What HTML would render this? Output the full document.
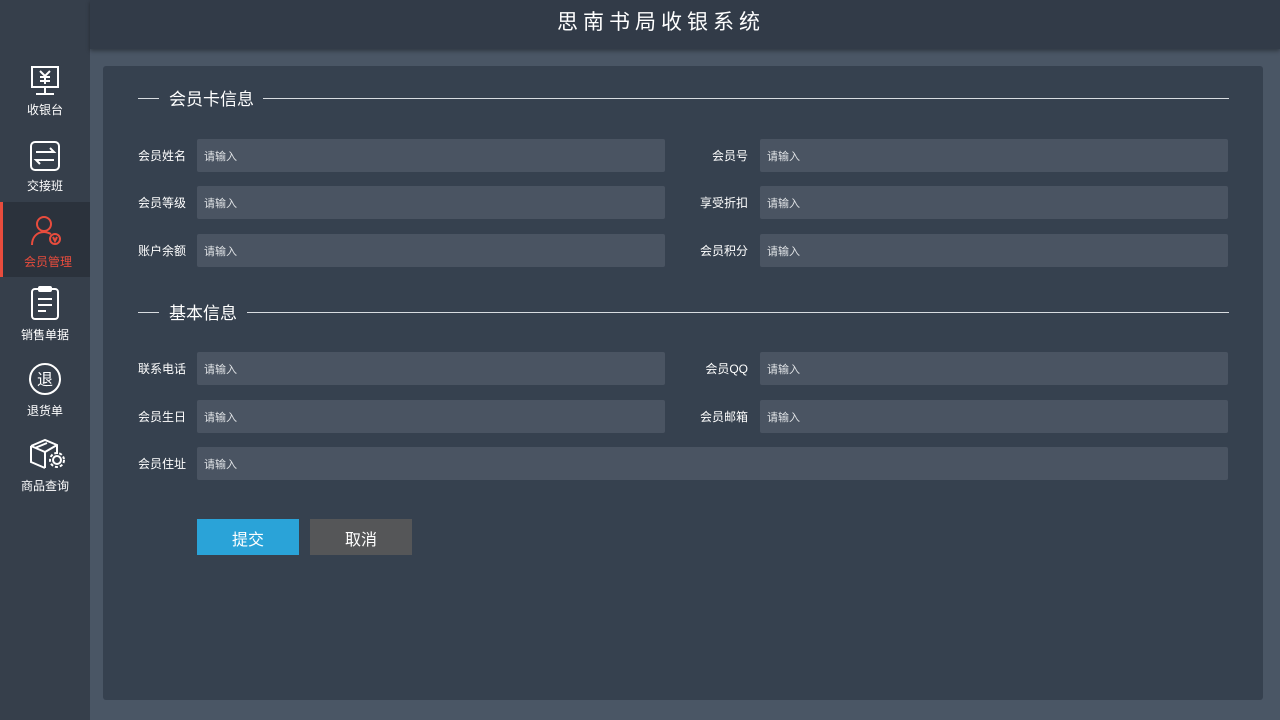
<!DOCTYPE html>
<html><head><meta charset="utf-8"><style>
*{margin:0;padding:0;box-sizing:border-box}
body{width:1280px;height:720px;background:#4a5665;font-family:"Liberation Sans","Noto Sans CJK SC",sans-serif;color:#fff;position:relative;overflow:hidden}
.side{position:absolute;left:0;top:0;width:90px;height:720px;background:#363f4b}
.hdr{position:absolute;left:90px;top:0;width:1190px;height:49px;background:#323b48;box-shadow:0 2px 4px rgba(0,0,0,.35)}
.hdr div{position:absolute;left:467px;top:10px;font-size:21px;line-height:26px;letter-spacing:5px;white-space:nowrap}
.item{position:absolute;left:0;width:90px;text-align:center;font-size:12px}
.item svg{position:absolute;left:27px}
.item span{position:absolute;left:0;width:90px}
.act{background:#2b323c;border-left:3px solid #e84c3d;color:#e84c3d}
.panel{position:absolute;left:103px;top:66px;width:1160px;height:634px;background:#36414f;border-radius:3px}
.sec{position:absolute;font-size:17px}
.ln{position:absolute;height:1px;background:#d8dce0}
.lbl{position:absolute;font-size:12px;width:60px}
.in{position:absolute;height:33px;background:#4a5462;border-radius:2px;font-size:11px;color:#e0e3e6;padding-left:7px;display:flex;align-items:center;padding-top:1px}
.btn{position:absolute;top:519px;width:102px;height:36px;font-size:16px;display:flex;align-items:center;justify-content:center;padding-top:1px}
</style></head><body>
<div class="side">
 <div class="item" style="top:62px;height:60px"><svg style="top:2px" width="36" height="34" viewBox="0 0 36 34" fill="none" stroke="#fff" stroke-width="2"><rect x="5" y="3" width="26" height="20"/><path d="M18 23v6M9 30h18M13 7l5 5 5-5M18 12v8M13 13h10M13 17h10"/></svg><span style="top:39px">收银台</span></div>
 <div class="item" style="top:138px;height:60px"><svg style="top:2px" width="36" height="34" viewBox="0 0 36 34" fill="none" stroke="#fff" stroke-width="2"><rect x="4" y="2" width="28" height="28" rx="4"/><path d="M9 12h18l-4-4M27 20H9l4 4"/></svg><span style="top:39px">交接班</span></div>
 <div class="item act" style="top:202px;height:75px"><svg style="top:12px;left:24px" width="36" height="34" viewBox="0 0 36 34" fill="none" stroke="#e84c3d" stroke-width="2"><circle cx="17" cy="10" r="7"/><path d="M5 31c0-8 5-13 12-13 3 0 5 1 7 2"/><circle cx="28" cy="25" r="5"/><path d="M26 23l2 4 2-4"/></svg><span style="top:51px">会员管理</span></div>
 <div class="item" style="top:284px;height:60px"><svg style="top:1px" width="36" height="36" viewBox="0 0 36 36" fill="none" stroke="#fff" stroke-width="2"><rect x="5" y="4" width="26" height="30" rx="3"/><rect x="12" y="2" width="12" height="4" rx="1"/><path d="M11 14h14M11 20h14M11 26h8"/></svg><span style="top:42px">销售单据</span></div>
 <div class="item" style="top:362px;height:60px"><svg style="top:0" width="36" height="36" viewBox="0 0 36 36" fill="none" stroke="#fff" stroke-width="2"><circle cx="18" cy="17" r="15"/><text x="18" y="23" font-size="16" fill="#fff" stroke="none" text-anchor="middle" font-family="Noto Sans CJK SC">退</text></svg><span style="top:40px">退货单</span></div>
 <div class="item" style="top:436px;height:60px"><svg style="top:0" width="38" height="36" viewBox="0 0 38 36" fill="none" stroke="#fff" stroke-width="2"><path d="M4 10l14-6 12 5v9M4 10v16l14 6M4 10l14 6v16M18 16l12-7M8 12l12-5"/><circle cx="30" cy="24" r="4"/><circle cx="30" cy="24" r="7" stroke-dasharray="3 2"/></svg><span style="top:41px">商品查询</span></div>
</div>
<div class="hdr"><div>思南书局收银系统</div></div>
<div class="panel"></div>
<div class="ln" style="left:138px;top:98px;width:21px"></div>
<div class="sec" style="left:169px;top:85px">会员卡信息</div>
<div class="ln" style="left:263px;top:98px;width:966px"></div>
<div class="ln" style="left:138px;top:312px;width:21px"></div>
<div class="sec" style="left:169px;top:299px">基本信息</div>
<div class="ln" style="left:247px;top:312px;width:982px"></div>

<div class="lbl" style="left:138px;top:147px">会员姓名</div><div class="in" style="left:197px;top:139px;width:468px">请输入</div>
<div class="lbl" style="left:688px;top:147px;text-align:right">会员号</div><div class="in" style="left:760px;top:139px;width:468px">请输入</div>
<div class="lbl" style="left:138px;top:194px">会员等级</div><div class="in" style="left:197px;top:186px;width:468px">请输入</div>
<div class="lbl" style="left:688px;top:194px;text-align:right">享受折扣</div><div class="in" style="left:760px;top:186px;width:468px">请输入</div>
<div class="lbl" style="left:138px;top:242px">账户余额</div><div class="in" style="left:197px;top:234px;width:468px">请输入</div>
<div class="lbl" style="left:688px;top:242px;text-align:right">会员积分</div><div class="in" style="left:760px;top:234px;width:468px">请输入</div>

<div class="lbl" style="left:138px;top:360px">联系电话</div><div class="in" style="left:197px;top:352px;width:468px">请输入</div>
<div class="lbl" style="left:688px;top:360px;text-align:right">会员QQ</div><div class="in" style="left:760px;top:352px;width:468px">请输入</div>
<div class="lbl" style="left:138px;top:408px">会员生日</div><div class="in" style="left:197px;top:400px;width:468px">请输入</div>
<div class="lbl" style="left:688px;top:408px;text-align:right">会员邮箱</div><div class="in" style="left:760px;top:400px;width:468px">请输入</div>
<div class="lbl" style="left:138px;top:455px">会员住址</div><div class="in" style="left:197px;top:447px;width:1031px">请输入</div>

<div class="btn" style="left:197px;background:#2aa3d8">提交</div>
<div class="btn" style="left:310px;background:#555658">取消</div>
</body></html>
